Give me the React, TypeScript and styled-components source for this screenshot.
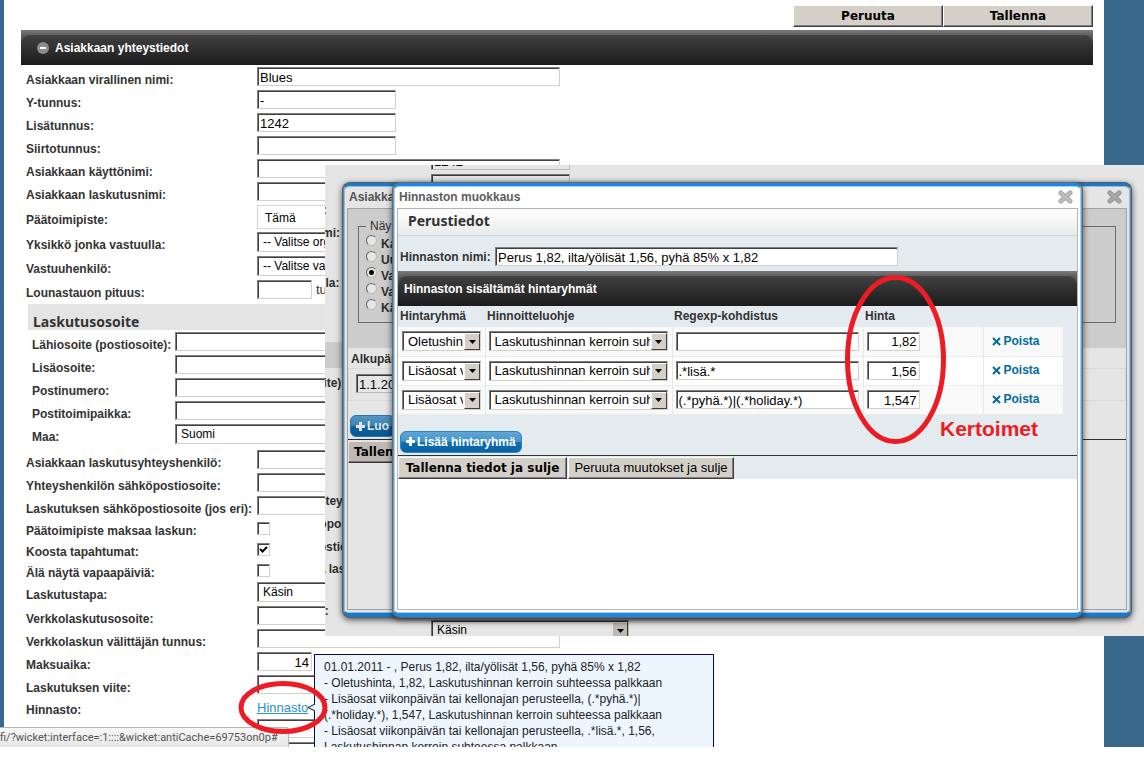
import React, { useId } from "react";
import styled, { createGlobalStyle, css } from "styled-components";

const GlobalStyle = createGlobalStyle`
  * { box-sizing: border-box; }
  body { margin: 0; background: #fff; font-family: "Liberation Sans", Arial, sans-serif; font-size: 12px; color: #333; }
  button, input, select { font-family: inherit; margin: 0; }
`;

/* ---------- shared controls ---------- */

const sunken = css`
  border: 1px solid;
  border-color: #808080 #d4d0c8 #d4d0c8 #808080;
  box-shadow: inset 1px 1px 0 #404040;
  background: #fff;
  color: #000;
  border-radius: 0;
  outline: none;
`;

const TextInput = styled.input<{ $w: number; $right?: boolean }>`
  ${sunken}
  width: ${(p) => p.$w}px;
  height: 19px;
  padding: 1px 2px 0;
  font-size: 13px;
  text-align: ${(p) => (p.$right ? "right" : "left")};
`;

const CheckBox = styled.input`
  ${sunken}
  appearance: none;
  width: 13px;
  height: 13px;
  display: block;
  &:checked {
    background: #fff url("data:image/svg+xml,%3Csvg xmlns='http://www.w3.org/2000/svg' viewBox='0 0 11 11'%3E%3Cpath d='M2 5l2.500 2.500L9 3' fill='none' stroke='%23000' stroke-width='2'/%3E%3C/svg%3E") center / 11px 11px no-repeat;
  }
`;

const RadioInput = styled.input`
  appearance: none;
  width: 11px;
  height: 11px;
  border-radius: 50%;
  border: 1px solid;
  border-color: #707070 #d4d0c8 #d4d0c8 #707070;
  background: #fff;
  &:checked { background: radial-gradient(circle, #000 0 2px, #fff 3px); }
`;

const SelectWrap = styled.span<{ $w: number }>`
  position: relative;
  display: block;
  width: ${(p) => p.$w}px;
`;

const SelectField = styled.select<{ $size: number; $plain?: boolean }>`
  ${sunken}
  appearance: none;
  display: block;
  width: 100%;
  height: ${(p) => (p.$plain ? 24 : 20)}px;
  padding: 0 17px 0 5px;
  font-size: ${(p) => p.$size}px;
  ${(p) => p.$plain && css`border-color: #d5d5d5; box-shadow: none; padding: 2px 17px 0 7px;`}
`;

const SelectArrow = styled.span`
  position: absolute;
  top: 2px;
  right: 1px;
  bottom: 1px;
  width: 16px;
  display: grid;
  place-items: center;
  pointer-events: none;
  background: #d4d0c8;
  border: 1px solid;
  border-color: #fff #404040 #404040 #fff;
`;

function Select({ w, text, id, label, size = 13, plain }: { w: number; text: string; id?: string; label?: string; size?: number; plain?: boolean }) {
  return (
    <SelectWrap $w={w}>
      <SelectField id={id} aria-label={label} $size={size} $plain={plain}>
        <option>{text}</option>
      </SelectField>
      {!plain && (
        <SelectArrow>
          <svg width="7" height="4" viewBox="0 0 7 4"><path d="M0 0h7L3.500 4z" fill="#000" /></svg>
        </SelectArrow>
      )}
    </SelectWrap>
  );
}

const ClassicButton = styled.button<{ $w?: number; $strong?: boolean }>`
  height: 22px;
  width: ${(p) => (p.$w ? p.$w + "px" : "auto")};
  padding: 0 5px;
  color: #000;
  background: #d4d0c8;
  border: 1px solid;
  border-color: #fff #404040 #404040 #fff;
  box-shadow: inset -1px -1px 0 #808080;
  font: ${(p) => (p.$strong ? 'bold 12px/18px "DejaVu Sans", Verdana, sans-serif' : '13px/18px "Liberation Sans", Arial, sans-serif')};
  white-space: nowrap;
`;

const BlueButton = styled.button`
  height: 22px;
  padding: 0 5px;
  display: inline-flex;
  align-items: center;
  gap: 2px;
  color: #fff;
  font-size: 12px;
  font-weight: bold;
  white-space: nowrap;
  border: 1px solid #2b86c2;
  border-radius: 6px;
  background: linear-gradient(#5fa6d6 0%, #4494cb 48%, #0f6db0 52%, #0a62a4 100%);
`;

const PlusIcon = () => (
  <svg width="9" height="9" viewBox="0 0 9 9"><path d="M4.500 0v9M0 4.500h9" stroke="currentColor" strokeWidth="3" /></svg>
);

/* ---------- dark section bars ---------- */

const DarkBar = styled.div`
  height: 35px;
  padding-top: 5px;
  background: linear-gradient(#7b7b7b, #5a5a5a 6px, #4c4c4c 14px);
`;

const DarkBarInner = styled.div<{ $pad: number }>`
  height: 30px;
  padding: 0 ${(p) => p.$pad}px 5px;
  display: flex;
  align-items: center;
  gap: 6px;
  border-radius: 9px 9px 0 0;
  background: linear-gradient(#414141, #1b1b1b);
  color: #fff;
  font-size: 12px;
  font-weight: bold;
`;

const ToggleButton = styled.button`
  padding: 0;
  border: 0;
  background: none;
  display: flex;
`;

/* ---------- customer form ---------- */

const Row = styled.div<{ $h: number; $cols: number }>`
  display: grid;
  grid-template-columns: ${(p) => p.$cols}px 1fr;
  align-items: center;
  height: ${(p) => p.$h}px;
`;

const RowLabel = styled.label`
  padding-top: 6px;
  font-weight: bold;
  line-height: 16px;
  white-space: nowrap;
`;

const FieldArea = styled.div`
  display: flex;
  align-items: center;
  gap: 4px;
  font-size: 13px;
`;

const FormBody = styled.div`
  padding-left: 5px;
`;

const AddressPanel = styled.div`
  width: 532px;
  margin: 3px 0 2px 2px;
`;

const AddressTitle = styled.h2`
  height: 26px;
  margin: 0;
  padding: 8px 5px 0;
  background: #e4e4e4;
  font: bold 14px/20px "Noto Sans", sans-serif;
`;

const AddressRows = styled.div`
  padding-left: 4px;
`;

const PriceLink = styled.a`
  color: #2a93c8;
  font-size: 13px;
`;

type Kind = "text" | "select" | "plain" | "check" | "link";
interface Field { label: string; kind: Kind; w?: number; value?: string; on?: boolean; right?: boolean; after?: string }

const basics: Field[] = [
  { label: "Asiakkaan virallinen nimi:", kind: "text", w: 303, value: "Blues" },
  { label: "Y-tunnus:", kind: "text", w: 139, value: "-" },
  { label: "Lisätunnus:", kind: "text", w: 139, value: "1242" },
  { label: "Siirtotunnus:", kind: "text", w: 139 },
  { label: "Asiakkaan käyttönimi:", kind: "text", w: 303 },
  { label: "Asiakkaan laskutusnimi:", kind: "text", w: 303 },
  { label: "Päätoimipiste:", kind: "plain", w: 198, value: "Tämä" },
  { label: "Yksikkö jonka vastuulla:", kind: "select", w: 198, value: "-- Valitse organisaatio" },
  { label: "Vastuuhenkilö:", kind: "select", w: 198, value: "-- Valitse vastuuhenkilö" },
  { label: "Lounastauon pituus:", kind: "text", w: 55, after: "tuntia" },
];

const address: Field[] = [
  { label: "Lähiosoite (postiosoite):", kind: "text", w: 385 },
  { label: "Lisäosoite:", kind: "text", w: 385 },
  { label: "Postinumero:", kind: "text", w: 385 },
  { label: "Postitoimipaikka:", kind: "text", w: 385 },
  { label: "Maa:", kind: "select", w: 385, value: "Suomi" },
];

const billing: Field[] = [
  { label: "Asiakkaan laskutusyhteyshenkilö:", kind: "text", w: 303 },
  { label: "Yhteyshenkilön sähköpostiosoite:", kind: "text", w: 303 },
  { label: "Laskutuksen sähköpostiosoite (jos eri):", kind: "text", w: 303 },
  { label: "Päätoimipiste maksaa laskun:", kind: "check" },
  { label: "Koosta tapahtumat:", kind: "check", on: true },
  { label: "Älä näytä vapaapäiviä:", kind: "check" },
  { label: "Laskutustapa:", kind: "select", w: 198, value: "Käsin" },
  { label: "Verkkolaskutusosoite:", kind: "text", w: 303 },
  { label: "Verkkolaskun välittäjän tunnus:", kind: "text", w: 303 },
  { label: "Maksuaika:", kind: "text", w: 55, value: "14", right: true },
  { label: "Laskutuksen viite:", kind: "text", w: 303 },
  { label: "Hinnasto:", kind: "link", value: "Hinnasto" },
  { label: "", kind: "text", w: 303 },
  { label: "", kind: "text", w: 303 },
];

const rowHeight: Record<Kind, number> = { text: 23, select: 24, plain: 27, check: 21, link: 21 };

function FieldRow({ field, cols }: { field: Field; cols: number }) {
  const id = useId();
  const { kind, w = 139, value = "" } = field;
  return (
    <Row $h={rowHeight[kind]} $cols={cols}>
      <RowLabel htmlFor={id}>{field.label}</RowLabel>
      <FieldArea>
        {kind === "text" && <TextInput id={id} $w={w} $right={field.right} defaultValue={value} />}
        {(kind === "select" || kind === "plain") && <Select id={id} w={w} text={value} size={12} plain={kind === "plain"} />}
        {kind === "check" && <CheckBox id={id} type="checkbox" defaultChecked={field.on} />}
        {kind === "link" && <PriceLink id={id} href="#">{value}</PriceLink>}
        {field.after}
      </FieldArea>
    </Row>
  );
}

/* The copy under the dialogs stops at the row the layer still shows. */
function CustomerForm({ billingRows = billing.length }: { billingRows?: number }) {
  return (
    <FormBody>
      {basics.map((f) => <FieldRow key={f.label} field={f} cols={231} />)}
      <AddressPanel>
        <AddressTitle>Laskutusosoite</AddressTitle>
        <AddressRows>
          {address.map((f) => <FieldRow key={f.label} field={f} cols={143} />)}
        </AddressRows>
      </AddressPanel>
      {billing.slice(0, billingRows).map((f, i) => <FieldRow key={i} field={f} cols={231} />)}
    </FormBody>
  );
}

/* ---------- page ---------- */

const Screen = styled.div`
  position: relative;
  height: calc(100vh - 21px);
  overflow: hidden;
`;

const Page = styled.main`
  min-height: 100%;
  padding: 5px 11px 0 17px;
  border-left: 4px solid #38698c;
  border-right: 40px solid #38698c;
`;

const TopActions = styled.div`
  display: flex;
  justify-content: flex-end;
  padding-bottom: 3px;
`;

/* ---------- dialog layer ---------- */

const DialogLayer = styled.section`
  position: absolute;
  left: 325px;
  right: 0;
  top: 165px;
  height: 471px;
  overflow: hidden;
  background: #fff;
`;

const BackForm = styled.div`
  position: absolute;
  left: -130px;
  top: -62px;
  width: 1072px;
`;

const Mask = styled.div`
  position: absolute;
  inset: 0;
  background: rgba(0, 0, 0, 0.1);
`;

const Dialog = styled.div<{ $left: number; $right: number }>`
  position: absolute;
  top: 18px;
  height: 434px;
  left: ${(p) => p.$left}px;
  right: ${(p) => p.$right}px;
  display: flex;
  flex-direction: column;
  padding: 0 3px 3px;
  background: #fff;
  border: solid #1d87e4;
  border-width: 3px 1px 4px;
  border-left-color: #5a9bd0;
  border-right-color: #5a9bd0;
  border-radius: 7px;
  box-shadow: inset 0 0 0 1px #a9d0f0, 0 0 0 1px #686868, 0 2px 6px 1px rgba(0, 0, 0, 0.65);
`;

const DialogHead = styled.header`
  height: 22px;
  padding: 0 5px 0 2px;
  display: flex;
  align-items: center;
  justify-content: space-between;
  color: #5c5c5c;
  font-weight: bold;
`;

const CloseButton = styled.button`
  padding: 0;
  border: 0;
  background: none;
  display: flex;
`;

const DialogBody = styled.div`
  flex: 1;
  overflow: hidden;
  border: 1px solid #b4b4b4;
`;

function DialogWindow({ left, right, title, children }: { left: number; right: number; title: string; children: React.ReactNode }) {
  return (
    <Dialog $left={left} $right={right} role="dialog" aria-label={title}>
      <DialogHead>
        {title}
        <CloseButton aria-label="Sulje">
          <svg width="15" height="14" viewBox="0 0 15 14">
            <path d="M3 3l9 8M12 3l-9 8" stroke="#a8a8a8" strokeWidth="5" strokeLinecap="round" />
            <path d="M3 3l9 8M12 3l-9 8" stroke="#bcbcbc" strokeWidth="3" strokeLinecap="round" />
          </svg>
        </CloseButton>
      </DialogHead>
      <DialogBody>{children}</DialogBody>
    </Dialog>
  );
}

/* back dialog */

const FilterArea = styled.div`
  height: 139px;
  padding: 10px 10px 0;
  background: #e4e4e4;
`;

const FilterSet = styled.fieldset`
  height: 104px;
  margin: 0;
  padding: 2px 0 0 7px;
  border: 1px solid #777;
  font-weight: bold;
  legend { padding: 0 4px; font-weight: normal; font-size: 12px; line-height: 14px; }
`;

const RadioLabel = styled.label`
  display: flex;
  gap: 4px;
  height: 16px;
  line-height: 18px;
`;

const DateLabel = styled.label`
  display: block;
  padding: 2px 3px 0;
  font-weight: bold;
  line-height: 18px;
`;

const DateCell = styled.div`
  margin-bottom: 14px;
  padding: 5px 7px 7px;
  border: 1px solid #f3f3f3;
`;

const ActionLine = styled.div`
  display: flex;
  gap: 1px;
  margin-top: 2px;
  padding: 1px 0 0;
  border-top: 1px solid #333;
`;

const BlueSlot = styled.div`
  display: flex;
  padding-left: 2px;
`;

/* front dialog */

const Tinted = styled.div`
  background: #e3ebee;
`;

const PanelTitle = styled.h2`
  margin: 0;
  height: 27px;
  padding: 2px 10px 0;
  font: bold 14px/20px "Noto Sans", sans-serif;
  border-bottom: 1px solid #ccd5d7;
  background: linear-gradient(#fff, #e9eaea);
`;

const NameRow = styled.div`
  height: 35px;
  padding: 6px 2px 0;
  display: grid;
  grid-template-columns: 95px 1fr;
  align-items: center;
  label { font-weight: bold; }
`;

const PriceTable = styled.table`
  width: calc(100% - 14px);
  table-layout: fixed;
  border-collapse: collapse;
  th { height: 21px; padding: 0 2px 2px; text-align: left; }
  td { height: 29px; padding: 0 3px; border-bottom: 1px solid #e9eced; border-right: 1px solid #e6e9ea; background: #f9f9f9; }
  td:first-child { padding-left: 4px; }
  td:last-child { border-right: 0; padding-left: 8px; }
  tr:nth-child(even) td { background: #fff; }
`;

const RemoveLink = styled.a`
  display: inline-flex;
  align-items: center;
  gap: 3px;
  color: #006c9e;
  font-weight: bold;
  text-decoration: none;
`;

const AddSlot = styled.div`
  display: flex;
  padding: 16px 2px 0;
`;

const prices = [
  { group: "Oletushinta", regexp: "", price: "1,82" },
  { group: "Lisäosat viikonpäivän tai kellonajan perusteella", regexp: ".*lisä.*", price: "1,56" },
  { group: "Lisäosat viikonpäivän tai kellonajan perusteella", regexp: "(.*pyhä.*)|(.*holiday.*)", price: "1,547" },
];

function PriceListDialog() {
  return (
    <DialogWindow left={68} right={62} title="Hinnaston muokkaus">
      <Tinted>
        <PanelTitle>Perustiedot</PanelTitle>
        <NameRow>
          <label htmlFor="list-name">Hinnaston nimi:</label>
          <TextInput id="list-name" $w={403} defaultValue="Perus 1,82, ilta/yölisät 1,56, pyhä 85% x 1,82" />
        </NameRow>
        <DarkBar><DarkBarInner $pad={6}>Hinnaston sisältämät hintaryhmät</DarkBarInner></DarkBar>
        <PriceTable>
          <colgroup>
            <col style={{ width: 87 }} /><col style={{ width: 187 }} /><col style={{ width: 191 }} /><col style={{ width: 120 }} /><col />
          </colgroup>
          <thead>
            <tr><th>Hintaryhmä</th><th>Hinnoitteluohje</th><th>Regexp-kohdistus</th><th>Hinta</th><th /></tr>
          </thead>
          <tbody>
            {prices.map((p) => (
              <tr key={p.price}>
                <td><Select w={79} text={p.group} label="Hintaryhmä" /></td>
                <td><Select w={179} text="Laskutushinnan kerroin suhteessa palkkaan" label="Hinnoitteluohje" /></td>
                <td><TextInput $w={183} aria-label="Regexp-kohdistus" defaultValue={p.regexp} /></td>
                <td><TextInput $w={53} $right aria-label="Hinta" defaultValue={p.price} /></td>
                <td>
                  <RemoveLink href="#">
                    <svg width="9" height="9" viewBox="0 0 9 9"><path d="M1 1l7 7M8 1L1 8" stroke="currentColor" strokeWidth="2" /></svg>
                    Poista
                  </RemoveLink>
                </td>
              </tr>
            ))}
          </tbody>
        </PriceTable>
        <AddSlot><BlueButton><PlusIcon />Lisää hintaryhmä</BlueButton></AddSlot>
        <ActionLine>
          <ClassicButton $w={169} $strong>Tallenna tiedot ja sulje</ClassicButton>
          <ClassicButton $w={166}>Peruuta muutokset ja sulje</ClassicButton>
        </ActionLine>
      </Tinted>
    </DialogWindow>
  );
}

function CustomerDialog() {
  return (
    <DialogWindow left={18} right={13} title="Asiakka">
      <FilterArea>
        <FilterSet>
          <legend>Näy</legend>
          {["Ka", "Uu", "Va", "Va", "Kä"].map((t, i) => (
            <RadioLabel key={i}><RadioInput type="radio" name="view" defaultChecked={i === 2} />{t}</RadioLabel>
          ))}
        </FilterSet>
      </FilterArea>
      <DateLabel htmlFor="start-date">Alkupäi</DateLabel>
      <DateCell><TextInput id="start-date" $w={90} defaultValue="1.1.20" /></DateCell>
      <BlueSlot><BlueButton><PlusIcon />Luo</BlueButton></BlueSlot>
      <ActionLine><ClassicButton $strong>Tallen</ClassicButton></ActionLine>
    </DialogWindow>
  );
}

/* ---------- tooltip, status bubble, marker pen ---------- */

const Tooltip = styled.div`
  position: absolute;
  left: 314px;
  top: 654px;
  width: 400px;
  padding: 4px 9px;
  color: #222;
  background: #edf5ff;
  border: 1px solid #0a0a3c;
  line-height: 16px;
  white-space: nowrap;
`;

const TooltipTip = styled.svg`
  position: absolute;
  left: -8px;
  top: 48px;
`;

const StatusBubble = styled.div`
  position: absolute;
  left: 0;
  bottom: 0;
  width: 289px;
  height: 20px;
  color: #555;
  font: 11px/20px Roboto, sans-serif;
  background: linear-gradient(#f7f7f7, #e6e6e6);
  border: solid #b5b5b5;
  border-width: 1px 1px 0 0;
  border-radius: 0 3px 0 0;
`;

const Marker = styled.svg`
  position: absolute;
  pointer-events: none;
`;

const PriceMarker = styled(Marker)`left: 844px; top: 274px;`;
const LinkMarker = styled(Marker)`left: 237px; top: 680px;`;

const MarkerNote = styled.div`
  position: absolute;
  left: 940px;
  top: 417px;
  color: #ed1c24;
  font-size: 21px;
  font-weight: bold;
  line-height: 24px;
`;

export default function App() {
  return (
    <>
      <GlobalStyle />
      <Screen>
        <Page>
          <TopActions>
            <ClassicButton $w={150} $strong>Peruuta</ClassicButton>
            <ClassicButton $w={150} $strong>Tallenna</ClassicButton>
          </TopActions>
          <DarkBar>
            <DarkBarInner $pad={16}>
              <ToggleButton aria-label="Piilota">
                <svg width="12" height="12" viewBox="0 0 12 12">
                  <circle cx="6" cy="6" r="6" fill="#8c8c8c" />
                  <path d="M3 6h6" stroke="#fff" strokeWidth="2" />
                </svg>
              </ToggleButton>
              Asiakkaan yhteystiedot
            </DarkBarInner>
          </DarkBar>
          <CustomerForm />
        </Page>
        <DialogLayer>
          <BackForm><CustomerForm billingRows={7} /></BackForm>
          <CustomerDialog />
          <Mask />
          <PriceListDialog />
        </DialogLayer>
        <Tooltip role="tooltip">
          01.01.2011 - , Perus 1,82, ilta/yölisät 1,56, pyhä 85% x 1,82<br />
          - Oletushinta, 1,82, Laskutushinnan kerroin suhteessa palkkaan<br />
          - Lisäosat viikonpäivän tai kellonajan perusteella, (.*pyhä.*)|<br />
          (.*holiday.*), 1,547, Laskutushinnan kerroin suhteessa palkkaan<br />
          - Lisäosat viikonpäivän tai kellonajan perusteella, .*lisä.*, 1,56,<br />
          Laskutushinnan kerroin suhteessa palkkaan
          <TooltipTip width="9" height="9" viewBox="0 0 9 9"><path d="M9 0L1 4.500L9 9z" fill="#edf5ff" /><path d="M8 1L1 4.500L8 8" fill="none" stroke="#0a0a3c" strokeWidth="1" /></TooltipTip>
        </Tooltip>
        <StatusBubble>fi/?wicket:interface=:1::::&amp;wicket:antiCache=69753on0p#</StatusBubble>
        <PriceMarker width="104" height="172" viewBox="0 0 104 172"><ellipse cx="51.500" cy="85.500" rx="48" ry="82" fill="none" stroke="#ed1c24" strokeWidth="5" /></PriceMarker>
        <LinkMarker width="92" height="56" viewBox="0 0 92 56"><ellipse cx="46" cy="27.500" rx="42" ry="24" fill="none" stroke="#ed1c24" strokeWidth="5" /></LinkMarker>
        <MarkerNote>Kertoimet</MarkerNote>
      </Screen>
    </>
  );
}
